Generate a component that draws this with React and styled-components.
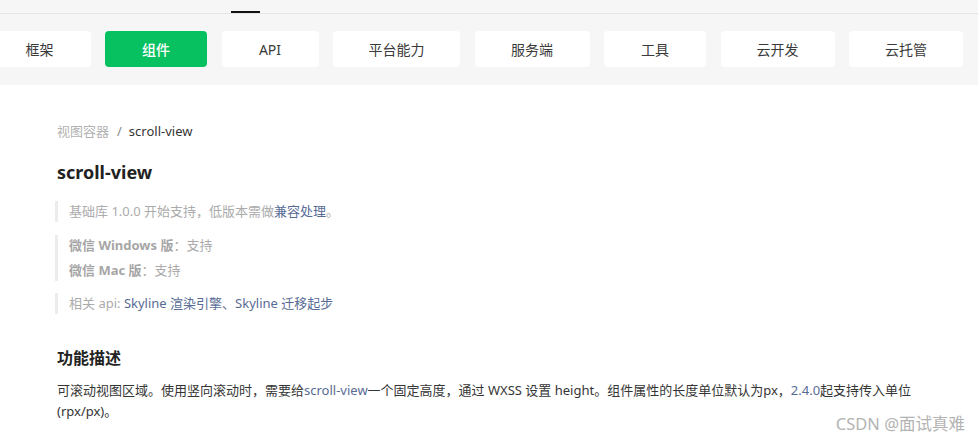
import styled, { createGlobalStyle } from 'styled-components';

const GlobalStyle = createGlobalStyle`
  html, body {
    margin: 0;
    padding: 0;
    background: #fff;
    font-family: "Noto Sans", "Noto Sans CJK SC", sans-serif;
    color: #353535;
  }
`;

const navItems = [
  { label: '框架', width: 102 },
  { label: '组件', width: 102, active: true },
  { label: 'API', width: 97 },
  { label: '平台能力', width: 127 },
  { label: '服务端', width: 115 },
  { label: '工具', width: 102 },
  { label: '云开发', width: 114 },
  { label: '云托管', width: 114 },
];

export default function App() {
  return (
    <Page>
      <GlobalStyle />
      <Header>
        <TabStrip>
          <TabIndicator />
        </TabStrip>
        <NavRow>
          {navItems.map((item) => (
            <NavButton key={item.label} $active={item.active} style={{ width: item.width }}>
              {item.label}
            </NavButton>
          ))}
        </NavRow>
      </Header>

      <Content>
        <Breadcrumb>
          <Crumb>视图容器</Crumb>
          <Slash>/</Slash>
          <span>scroll-view</span>
        </Breadcrumb>

        <Title>scroll-view</Title>

        <Quote $top={16}>
          <QuoteLine>
            基础库 1.0.0 开始支持，低版本需做<Link>兼容处理</Link>。
          </QuoteLine>
        </Quote>

        <Quote $top={13}>
          <QuoteLine>
            <Strong>微信 Windows 版</Strong>：支持
          </QuoteLine>
          <QuoteLine>
            <Strong>微信 Mac 版</Strong>：支持
          </QuoteLine>
        </Quote>

        <Quote $top={12}>
          <QuoteLine>
            相关 api: <Link>Skyline 渲染引擎</Link><Link>、</Link><Link>Skyline 迁移起步</Link>
          </QuoteLine>
        </Quote>

        <SectionTitle>功能描述</SectionTitle>
        <Paragraph>
          可滚动视图区域。使用竖向滚动时，需要给<Link>scroll-view</Link>一个固定高度，通过 WXSS 设置 height。组件属性的长度单位默认为px，<Link>2.4.0</Link>起支持传入单位
          <br />
          (rpx/px)。
        </Paragraph>
      </Content>

      <Watermark>CSDN @面试真难</Watermark>
    </Page>
  );
}

const Page = styled.div`
  position: relative;
  width: 978px;
  height: 444px;
  overflow: hidden;
`;

const Header = styled.header`
  height: 85px;
  background: #f6f6f6;
`;

const TabStrip = styled.div`
  height: 13px;
  border-bottom: 1px solid #e6e6e6;
  display: flex;
  align-items: flex-end;
  padding-left: 231px;
`;

const TabIndicator = styled.div`
  width: 29px;
  height: 2px;
  background: #111;
`;

const NavRow = styled.nav`
  display: flex;
  gap: 14.5px;
  margin: 17px 0 0 -11.5px;
`;

const NavButton = styled.div`
  flex: none;
  height: 36px;
  border-radius: 4px;
  display: flex;
  align-items: center;
  justify-content: center;
  font-size: 14px;
  background: ${(p) => (p.$active ? '#07c160' : '#fff')};
  color: ${(p) => (p.$active ? '#fff' : '#3a3a3a')};
  font-weight: ${(p) => (p.$active ? 500 : 400)};
`;

const Content = styled.main`
  padding: 36px 0 0 57px;
`;

const Breadcrumb = styled.div`
  font-size: 13px;
  line-height: 20px;
  color: #353535;
`;

const Crumb = styled.span`
  color: #b2b2b2;
`;

const Slash = styled.span`
  color: #888;
  margin: 0 7px 0 8px;
`;

const Title = styled.h1`
  margin: 18px 0 0;
  font-size: 18px;
  line-height: 26px;
  font-weight: 700;
  color: #222;
`;

const Quote = styled.blockquote`
  margin: ${(p) => p.$top}px 0 0 -2px;
  padding-left: 11px;
  border-left: 3px solid #ececec;
  display: flex;
  flex-direction: column;
  gap: 4px;
`;

const QuoteLine = styled.p`
  margin: 0;
  font-size: 13px;
  line-height: 21px;
  color: #ababab;
`;

const Strong = styled.strong`
  font-weight: 700;
  color: #a6a6a6;
`;

const Link = styled.a`
  color: #576b95;
  text-decoration: none;
`;

const SectionTitle = styled.h2`
  margin: 32px 0 0;
  font-size: 16px;
  line-height: 24px;
  font-weight: 700;
  color: #222;
`;

const Paragraph = styled.p`
  margin: 10px 0 0;
  font-size: 13px;
  line-height: 21px;
  color: #353535;
`;

const Watermark = styled.div`
  position: absolute;
  right: 13px;
  bottom: 9px;
  font-size: 16.5px;
  color: #b3b3b3;
`;
